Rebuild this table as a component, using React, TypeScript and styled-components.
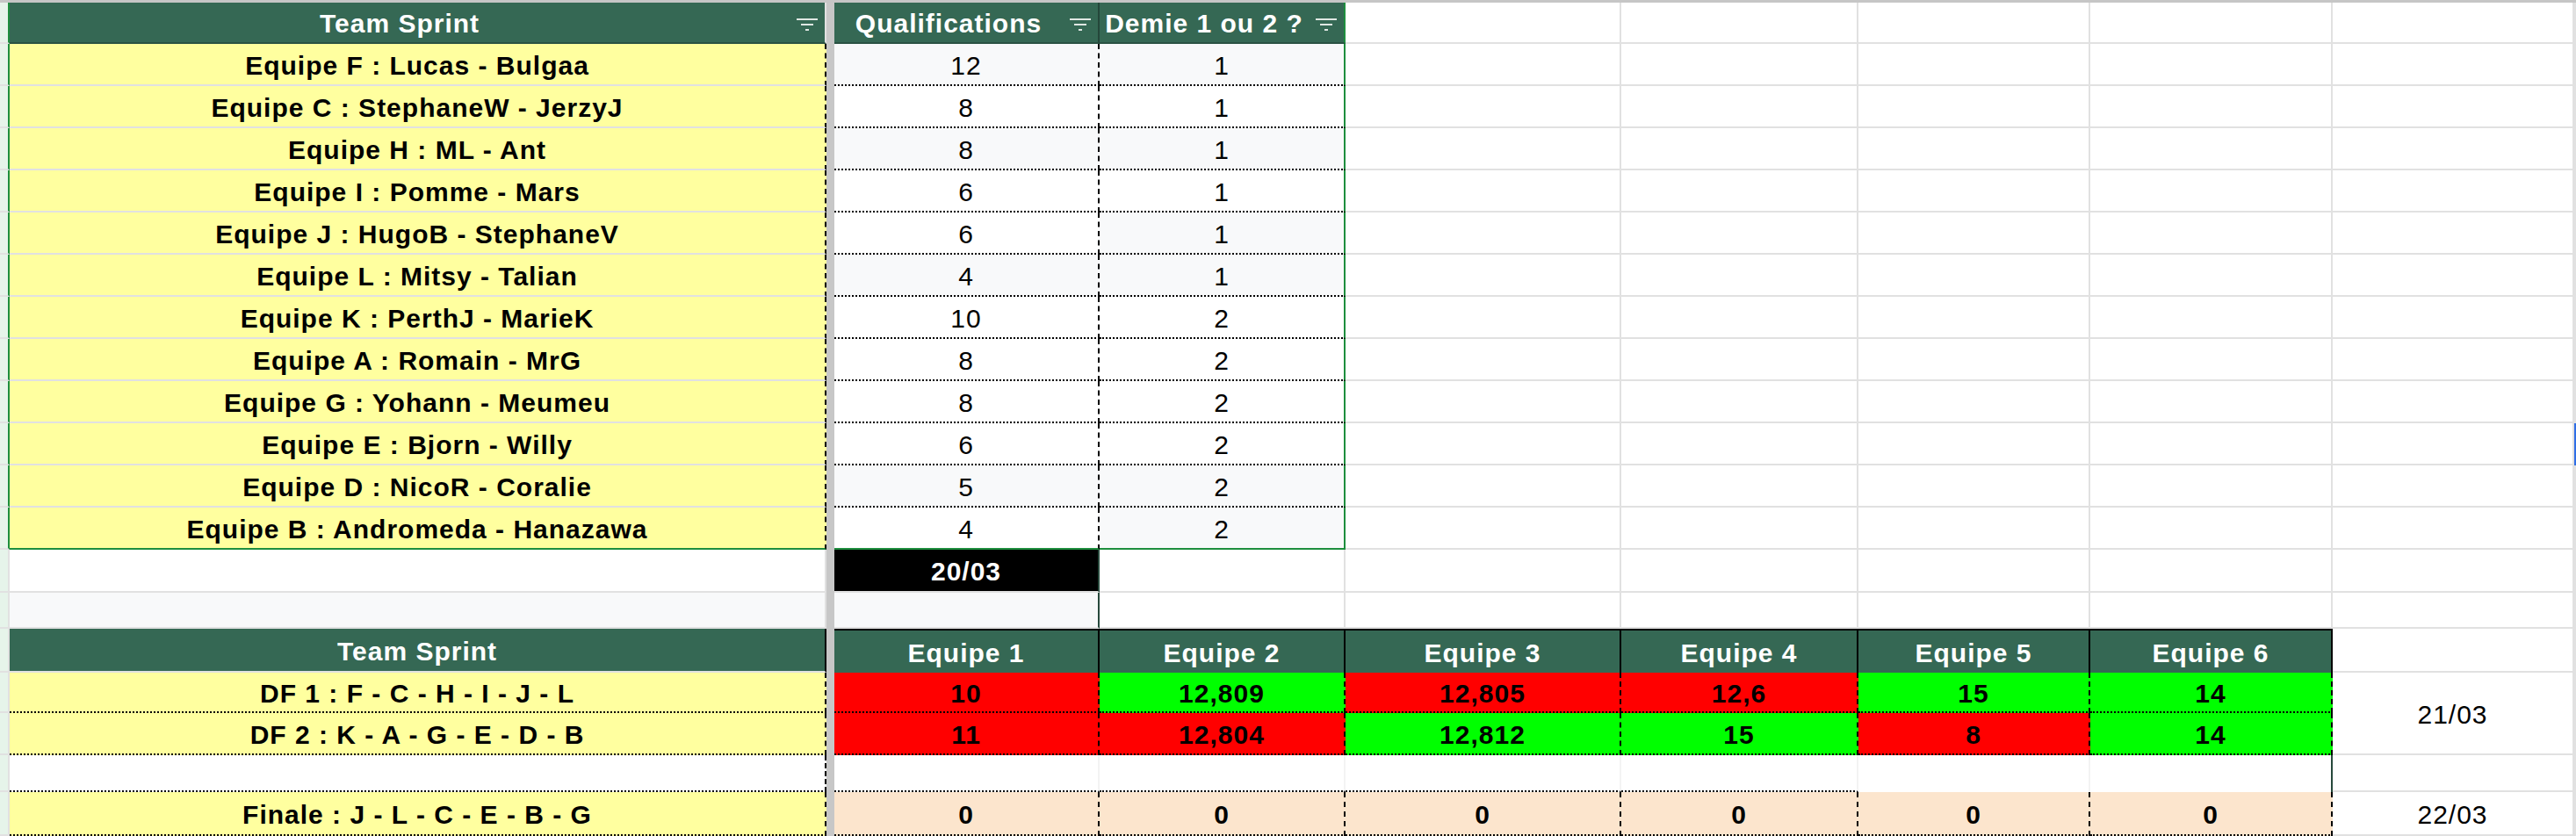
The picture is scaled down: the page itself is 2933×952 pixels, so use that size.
import React from 'react';
import styled, {createGlobalStyle} from 'styled-components';

const GlobalStyle = createGlobalStyle`
  html, body {
    margin: 0;
    padding: 0;
    background: #fff;
  }
  body {
    font-family: 'Liberation Sans', Arial, sans-serif;
  }
`;

const GRID = '2px solid #e1e1e1';
const FAINT = '2px solid #f3f3f3';
const DOT = '2px dotted #000';
const DASH = '2px dashed #000';
const TABLE = '2px solid #1e8e3e';
const HEAD_LINE = '2px solid #2a5243';
const HEAD_SEP = '2px solid #24473a';
const BLACK = '2px solid #000';
const DARK = '2px solid #27493c';

const GREEN = '#356854';
const YELLOW = '#ffff9f';
const BAND = '#f8f9fa';
const RED = '#ff0000';
const LIME = '#00ff00';
const PEACH = '#fce5cd';
const MINT = '#e6f4ea';

type Edges = {
  $bg?: string;
  $right?: string;
  $bottom?: string;
  $top?: string;
};

const Sheet = styled.div`
  display: grid;
  grid-template-columns: 11px 930px 9px 302px 280px 314px 270px 264px 276px 275px 2px;
  grid-template-rows: 47px repeat(12, 48px) 49px 41px 50px 46px 48px 42px 50px;
  width: 2933px;
  border-top: 3px solid #c6c6c6;
  overflow: hidden;
`;

const Cell = styled.div<Edges>`
  box-sizing: border-box;
  display: flex;
  align-items: center;
  justify-content: center;
  min-width: 0;
  padding-top: 3px;
  overflow: hidden;
  white-space: nowrap;
  background: ${p => p.$bg ?? '#fff'};
  border-right: ${p => p.$right ?? GRID};
  border-bottom: ${p => p.$bottom ?? GRID};
  border-top: ${p => p.$top ?? 'none'};
  color: #000;
  font-size: 30px;
  letter-spacing: 1px;
`;

const RowHead = styled(Cell)`
  background: ${MINT};
`;

const FreezeBar = styled.div`
  grid-column: 3;
  grid-row: 1 / -1;
  background: #c7c7c7;
`;

const EdgeCell = styled.div<{$mark?: boolean}>`
  background: ${p => (p.$mark ? '#2f6ee6' : '#e1e1e1')};
`;

const Head = styled(Cell)<{$filter?: boolean}>`
  position: relative;
  background: ${GREEN};
  color: #fff;
  font-weight: 700;
  padding-right: ${p => (p.$filter ? '40px' : '0')};
`;

const Name = styled(Cell)`
  background: ${YELLOW};
  font-weight: 700;
`;

const Num = styled(Cell)`
  font-weight: 400;
`;

const Score = styled(Cell)`
  font-weight: 700;
`;

const Day = styled(Cell)`
  background: #000;
  color: #fff;
  font-weight: 700;
`;

const MergedDate = styled(Cell)`
  grid-row: span 2;
`;

const FilterSvg = styled.svg`
  position: absolute;
  right: 8px;
  top: 18px;
  fill: #dfe7e3;
`;

const FilterIcon = () => (
  <FilterSvg width="24" height="14" viewBox="0 0 24 14">
    <rect x="0" y="0" width="24" height="2" />
    <rect x="5" y="6" width="14" height="2" />
    <rect x="10" y="12" width="4" height="2" />
  </FilterSvg>
);

const blanks = (key: string, n: number, edges: Edges = {}) =>
  Array.from({length: n}, (_, i) => <Cell key={`${key}-${i}`} {...edges} />);

type Team = {name: string; qual: number; demi: number; qualBand: boolean; demiBand: boolean};

const teams: Team[] = [
  {name: 'Equipe F : Lucas - Bulgaa', qual: 12, demi: 1, qualBand: true, demiBand: true},
  {name: 'Equipe C : StephaneW - JerzyJ', qual: 8, demi: 1, qualBand: false, demiBand: false},
  {name: 'Equipe H : ML - Ant', qual: 8, demi: 1, qualBand: true, demiBand: true},
  {name: 'Equipe I : Pomme - Mars', qual: 6, demi: 1, qualBand: false, demiBand: false},
  {name: 'Equipe J : HugoB - StephaneV', qual: 6, demi: 1, qualBand: false, demiBand: true},
  {name: 'Equipe L : Mitsy - Talian', qual: 4, demi: 1, qualBand: true, demiBand: true},
  {name: 'Equipe K : PerthJ - MarieK', qual: 10, demi: 2, qualBand: false, demiBand: false},
  {name: 'Equipe A : Romain - MrG', qual: 8, demi: 2, qualBand: false, demiBand: false},
  {name: 'Equipe G : Yohann - Meumeu', qual: 8, demi: 2, qualBand: false, demiBand: false},
  {name: 'Equipe E : Bjorn - Willy', qual: 6, demi: 2, qualBand: false, demiBand: false},
  {name: 'Equipe D : NicoR - Coralie', qual: 5, demi: 2, qualBand: true, demiBand: true},
  {name: 'Equipe B : Andromeda - Hanazawa', qual: 4, demi: 2, qualBand: false, demiBand: true},
];

type Result = {value: string; win: boolean};

const semis: {label: string; results: Result[]}[] = [
  {
    label: 'DF 1 : F - C - H - I - J - L',
    results: [
      {value: '10', win: false},
      {value: '12,809', win: true},
      {value: '12,805', win: false},
      {value: '12,6', win: false},
      {value: '15', win: true},
      {value: '14', win: true},
    ],
  },
  {
    label: 'DF 2 : K - A - G - E - D - B',
    results: [
      {value: '11', win: false},
      {value: '12,804', win: false},
      {value: '12,812', win: true},
      {value: '15', win: true},
      {value: '8', win: false},
      {value: '14', win: true},
    ],
  },
];

const finals = ['0', '0', '0', '0', '0', '0'];
const teamHeads = ['Equipe 1', 'Equipe 2', 'Equipe 3', 'Equipe 4', 'Equipe 5', 'Equipe 6'];

export default function App() {
  return (
    <>
      <GlobalStyle />
      <Sheet>
        <FreezeBar />

        {/* qualifications header */}
        <RowHead $right={TABLE} />
        <Head $filter $bottom={HEAD_LINE}>
          Team Sprint
          <FilterIcon />
        </Head>
        <Head $filter $bottom={HEAD_LINE} $right={HEAD_SEP}>
          Qualifications
          <FilterIcon />
        </Head>
        <Head $filter $bottom={HEAD_LINE} $right={TABLE}>
          Demie 1 ou 2 ?
          <FilterIcon />
        </Head>
        {blanks('h', 5)}
        <EdgeCell />

        {teams.map((t, i) => {
          const last = i === teams.length - 1;
          return (
            <React.Fragment key={t.name}>
              <RowHead $right={TABLE} />
              <Name $right={DASH} $bottom={last ? TABLE : GRID}>
                {t.name}
              </Name>
              <Num $bg={t.qualBand ? BAND : '#fff'} $right={DASH} $bottom={last ? TABLE : DOT}>
                {t.qual}
              </Num>
              <Num $bg={t.demiBand ? BAND : '#fff'} $right={TABLE} $bottom={last ? TABLE : DOT}>
                {t.demi}
              </Num>
              {blanks(`t${i}`, 5)}
              <EdgeCell $mark={i === 9} />
            </React.Fragment>
          );
        })}

        {/* date of qualifications */}
        <RowHead />
        <Cell />
        <Day $right={DARK}>20/03</Day>
        {blanks('d', 6)}
        <EdgeCell />

        <RowHead />
        <Cell $bg={BAND} />
        <Cell $bg={BAND} $right={DARK} />
        {blanks('e', 6)}
        <EdgeCell />

        {/* finals header */}
        <RowHead />
        <Head $right={BLACK}>Team Sprint</Head>
        {teamHeads.map(h => (
          <Head key={h} $top={BLACK} $right={BLACK} $bottom="none">
            {h}
          </Head>
        ))}
        <Cell />
        <EdgeCell />

        {semis.map((s, i) => (
          <React.Fragment key={s.label}>
            <RowHead />
            <Name $right={DASH} $bottom={DOT}>
              {s.label}
            </Name>
            {s.results.map((r, j) => (
              <Score key={j} $bg={r.win ? LIME : RED} $right={DASH} $bottom={DOT}>
                {r.value}
              </Score>
            ))}
            {i === 0 && <MergedDate>21/03</MergedDate>}
            <EdgeCell />
          </React.Fragment>
        ))}

        <RowHead />
        <Cell $right={DASH} $bottom={DOT} />
        {blanks('g', 4, {$right: FAINT, $bottom: DOT})}
        <Cell $right={FAINT} $bottom="none" />
        <Cell $right={DARK} $bottom="none" />
        <Cell />
        <EdgeCell />

        <RowHead />
        <Name $right={DASH} $bottom={DOT}>
          Finale : J - L - C - E - B - G
        </Name>
        {finals.map((v, j) => (
          <Score key={j} $bg={PEACH} $right={DASH} $bottom={DOT}>
            {v}
          </Score>
        ))}
        <Num>22/03</Num>
        <EdgeCell />
      </Sheet>
    </>
  );
}
